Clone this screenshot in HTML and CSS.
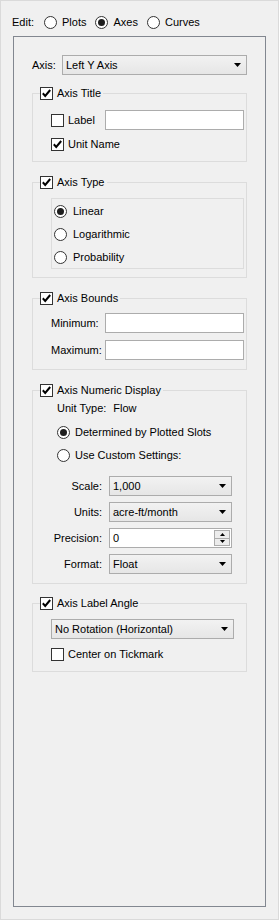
FILE: index.html
```html
<!DOCTYPE html>
<html>
<head>
<meta charset="utf-8">
<link rel="stylesheet" href="styles.css">
</head>
<body>
<div class="page">
  <div class="edit-row">
    <span class="edit-lbl">Edit:</span>
    <span class="opt"><svg class="rb" width="13" height="13" viewBox="0 0 13 13"><circle cx="6.5" cy="6.5" r="6" fill="#fff" stroke="#333"/></svg>Plots</span>
    <span class="opt"><svg class="rb" width="13" height="13" viewBox="0 0 13 13"><circle cx="6.5" cy="6.5" r="6" fill="#fff" stroke="#333"/><circle cx="6.5" cy="6.5" r="3.5" fill="#1e1e1e"/></svg>Axes</span>
    <span class="opt"><svg class="rb" width="13" height="13" viewBox="0 0 13 13"><circle cx="6.5" cy="6.5" r="6" fill="#fff" stroke="#333"/></svg>Curves</span>
  </div>

  <div class="panel">
    <div class="axis-row">
      <span class="axis-lbl">Axis:</span>
      <div class="select w185"><span>Left Y Axis</span><svg width="7" height="4" viewBox="0 0 7 4"><path d="M0 0H7L3.5 4Z" fill="#000"/></svg></div>
    </div>

    <fieldset class="group g1">
      <legend><svg width="13" height="13" viewBox="0 0 13 13"><rect x="0.5" y="0.5" width="12" height="12" fill="#fff" stroke="#333"/><path d="M2.8 6.3L5.2 8.9L10.2 3" fill="none" stroke="#000" stroke-width="2"/></svg><span>Axis Title</span></legend>
      <div class="gbody">
        <div class="row h20">
          <span class="cb w54"><svg width="13" height="13" viewBox="0 0 13 13"><rect x="0.5" y="0.5" width="12" height="12" fill="#fff" stroke="#333"/></svg>Label</span>
          <div class="input w139"></div>
        </div>
        <div class="row h13 mt8">
          <span class="cb"><svg width="13" height="13" viewBox="0 0 13 13"><rect x="0.5" y="0.5" width="12" height="12" fill="#fff" stroke="#333"/><path d="M2.8 6.3L5.2 8.9L10.2 3" fill="none" stroke="#000" stroke-width="2"/></svg>Unit Name</span>
        </div>
      </div>
    </fieldset>

    <fieldset class="group g2">
      <legend><svg width="13" height="13" viewBox="0 0 13 13"><rect x="0.5" y="0.5" width="12" height="12" fill="#fff" stroke="#333"/><path d="M2.8 6.3L5.2 8.9L10.2 3" fill="none" stroke="#000" stroke-width="2"/></svg><span>Axis Type</span></legend>
      <div class="gbody">
        <div class="frame">
          <div class="rrow"><svg width="13" height="13" viewBox="0 0 13 13"><circle cx="6.5" cy="6.5" r="6" fill="#fff" stroke="#333"/><circle cx="6.5" cy="6.5" r="3.5" fill="#1e1e1e"/></svg>Linear</div>
          <div class="rrow mt10"><svg width="13" height="13" viewBox="0 0 13 13"><circle cx="6.5" cy="6.5" r="6" fill="#fff" stroke="#333"/></svg>Logarithmic</div>
          <div class="rrow mt10"><svg width="13" height="13" viewBox="0 0 13 13"><circle cx="6.5" cy="6.5" r="6" fill="#fff" stroke="#333"/></svg>Probability</div>
        </div>
      </div>
    </fieldset>

    <fieldset class="group g3">
      <legend><svg width="13" height="13" viewBox="0 0 13 13"><rect x="0.5" y="0.5" width="12" height="12" fill="#fff" stroke="#333"/><path d="M2.8 6.3L5.2 8.9L10.2 3" fill="none" stroke="#000" stroke-width="2"/></svg><span>Axis Bounds</span></legend>
      <div class="gbody">
        <div class="row h20"><span class="w54">Minimum:</span><div class="input w139"></div></div>
        <div class="row h20 mt7"><span class="w54">Maximum:</span><div class="input w139"></div></div>
      </div>
    </fieldset>

    <fieldset class="group g4">
      <legend><svg width="13" height="13" viewBox="0 0 13 13"><rect x="0.5" y="0.5" width="12" height="12" fill="#fff" stroke="#333"/><path d="M2.8 6.3L5.2 8.9L10.2 3" fill="none" stroke="#000" stroke-width="2"/></svg><span>Axis Numeric Display</span></legend>
      <div class="gbody">
        <div class="unit-row"><span>Unit Type:</span><span>Flow</span></div>
        <div class="rrow ind mt11"><svg width="13" height="13" viewBox="0 0 13 13"><circle cx="6.5" cy="6.5" r="6" fill="#fff" stroke="#333"/><circle cx="6.5" cy="6.5" r="3.5" fill="#1e1e1e"/></svg>Determined by Plotted Slots</div>
        <div class="rrow ind mt10"><svg width="13" height="13" viewBox="0 0 13 13"><circle cx="6.5" cy="6.5" r="6" fill="#fff" stroke="#333"/></svg>Use Custom Settings:</div>
        <div class="frow mt14"><span class="flbl">Scale:</span><div class="select w123"><span>1,000</span><svg width="7" height="4" viewBox="0 0 7 4"><path d="M0 0H7L3.5 4Z" fill="#000"/></svg></div></div>
        <div class="frow mt6"><span class="flbl">Units:</span><div class="select w123"><span>acre-ft/month</span><svg width="7" height="4" viewBox="0 0 7 4"><path d="M0 0H7L3.5 4Z" fill="#000"/></svg></div></div>
        <div class="frow mt6"><span class="flbl">Precision:</span>
          <div class="spin w123"><span class="spin-val">0</span>
            <div class="spin-btns">
              <div class="sb"><svg width="5" height="3" viewBox="0 0 5 3"><path d="M0 3H5L2.5 0Z" fill="#000"/></svg></div>
              <div class="sb sb2"><svg width="5" height="3" viewBox="0 0 5 3"><path d="M0 0H5L2.5 3Z" fill="#000"/></svg></div>
            </div>
          </div>
        </div>
        <div class="frow mt6"><span class="flbl">Format:</span><div class="select w123"><span>Float</span><svg width="7" height="4" viewBox="0 0 7 4"><path d="M0 0H7L3.5 4Z" fill="#000"/></svg></div></div>
      </div>
    </fieldset>

    <fieldset class="group g5">
      <legend><svg width="13" height="13" viewBox="0 0 13 13"><rect x="0.5" y="0.5" width="12" height="12" fill="#fff" stroke="#333"/><path d="M2.8 6.3L5.2 8.9L10.2 3" fill="none" stroke="#000" stroke-width="2"/></svg><span>Axis Label Angle</span></legend>
      <div class="gbody">
        <div class="select w183"><span>No Rotation (Horizontal)</span><svg width="7" height="4" viewBox="0 0 7 4"><path d="M0 0H7L3.5 4Z" fill="#000"/></svg></div>
        <div class="row h13 mt9">
          <span class="cb"><svg width="13" height="13" viewBox="0 0 13 13"><rect x="0.5" y="0.5" width="12" height="12" fill="#fff" stroke="#333"/></svg>Center on Tickmark</span>
        </div>
      </div>
    </fieldset>
  </div>
</div>
</body>
</html>
```

FILE: styles.css
```css
html, body {
  margin: 0;
  padding: 0;
  background: #f0f0f0;
}
body {
  font-family: "Liberation Sans", Arial, sans-serif;
  font-size: 11px;
  color: #000;
  line-height: 13px;
}
svg { display: block; flex: none; }

.page {
  width: 279px;
  height: 920px;
  box-sizing: border-box;
  border: 1px solid #dadada;
  background: #f0f0f0;
  padding-top: 15px;
}

.edit-row {
  display: flex;
  align-items: center;
  height: 13px;
  margin-left: 11px;
}
.edit-lbl { margin-right: 10px; }
.opt {
  display: flex;
  align-items: center;
  gap: 5px;
  margin-right: 9px;
}

.panel {
  margin: 7px 0 0 12px;
  width: 253px;
  height: 871px;
  box-sizing: border-box;
  border: 1px solid #828790;
  padding: 18px 0 0 18px;
}

.axis-row {
  display: flex;
  align-items: center;
  height: 20px;
}
.axis-lbl { width: 30px; flex: none; }

.select {
  height: 20px;
  box-sizing: border-box;
  border: 1px solid #acacac;
  background: linear-gradient(#f2f2f2, #e6e6e6);
  display: flex;
  align-items: center;
  justify-content: space-between;
  padding: 0 5px 0 3px;
  flex: none;
}
.input {
  height: 20px;
  box-sizing: border-box;
  border: 1px solid #acacac;
  background: #fff;
  flex: none;
}
.w185 { width: 185px; }
.w183 { width: 183px; }
.w139 { width: 139px; }
.w123 { width: 123px; }
.w54 { width: 54px; flex: none; }

.group {
  margin: 0;
  width: 215px;
  box-sizing: border-box;
  border: 1px solid #dcdcdc;
  padding: 0;
  min-width: 0;
}
.group legend {
  display: flex;
  align-items: center;
  gap: 4px;
  height: 13px;
  margin-left: 7px;
  padding: 0 2px 0 0;
}
.gbody { padding: 0 2px 0 18px; }

.g1 { margin-top: 12px; }
.g1 .gbody { padding-top: 10px; padding-bottom: 10px; }
.g2 { margin-top: 14px; }
.g2 .gbody { padding-top: 9px; padding-bottom: 8px; }
.g3 { margin-top: 14px; }
.g3 .gbody { padding-top: 8px; padding-bottom: 9px; }
.g4 { margin-top: 14px; }
.g4 .gbody { padding-top: 5px; padding-bottom: 9px; }
.g5 { margin-top: 13px; }
.g5 .gbody { padding-top: 9px; padding-bottom: 10px; }

.row { display: flex; align-items: center; }
.h20 { height: 20px; }
.h13 { height: 13px; }
.cb { display: flex; align-items: center; gap: 4px; }

.mt6 { margin-top: 6px; }
.mt7 { margin-top: 7px; }
.mt8 { margin-top: 8px; }
.mt9 { margin-top: 9px; }
.mt10 { margin-top: 10px; }
.mt11 { margin-top: 11px; }
.mt14 { margin-top: 14px; }

.frame {
  width: 193px;
  box-sizing: border-box;
  border: 1px solid #dcdcdc;
  padding: 6px 2px 4px 2px;
}
.rrow {
  display: flex;
  align-items: center;
  gap: 6px;
  height: 13px;
}
.rrow.ind { margin-left: 6px; gap: 5px; }

.unit-row {
  display: flex;
  gap: 7px;
  height: 13px;
  margin-left: 6px;
  align-items: center;
}

.frow {
  display: flex;
  align-items: center;
  gap: 7px;
  height: 20px;
}
.flbl { width: 51px; text-align: right; flex: none; }

.spin {
  height: 20px;
  box-sizing: border-box;
  border: 1px solid #acacac;
  background: #fff;
  display: flex;
  padding: 1px;
  flex: none;
}
.spin-val {
  flex: 1;
  padding-left: 2px;
  display: flex;
  align-items: center;
}
.spin-btns {
  width: 16px;
  display: flex;
  flex-direction: column;
}
.sb {
  flex: 1;
  box-sizing: border-box;
  border: 1px solid #acacac;
  background: #ececec;
  display: flex;
  align-items: center;
  justify-content: center;
}
.sb2 { margin-top: -1px; }
```
